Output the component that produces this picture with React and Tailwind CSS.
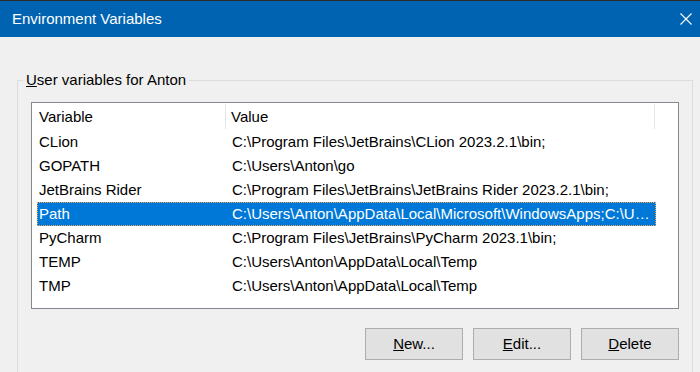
const rows = [
  { name: 'CLion', value: 'C:\\Program Files\\JetBrains\\CLion 2023.2.1\\bin;' },
  { name: 'GOPATH', value: 'C:\\Users\\Anton\\go' },
  { name: 'JetBrains Rider', value: 'C:\\Program Files\\JetBrains\\JetBrains Rider 2023.2.1\\bin;' },
  { name: 'Path', value: 'C:\\Users\\Anton\\AppData\\Local\\Microsoft\\WindowsApps;C:\\U…', selected: true },
  { name: 'PyCharm', value: 'C:\\Program Files\\JetBrains\\PyCharm 2023.1\\bin;' },
  { name: 'TEMP', value: 'C:\\Users\\Anton\\AppData\\Local\\Temp' },
  { name: 'TMP', value: 'C:\\Users\\Anton\\AppData\\Local\\Temp' },
];

const buttons = [
  { key: 'N', rest: 'ew...' },
  { key: 'E', rest: 'dit...' },
  { key: 'D', rest: 'elete' },
];

export default function App() {
  return (
    <div
      className="w-[700px] h-[372px] overflow-hidden bg-[#f0f0f0] text-black text-[15px] leading-[20px] flex flex-col"
      style={{ fontFamily: '"Liberation Sans", Arial, sans-serif' }}
    >
      {/* Title bar */}
      <div className="h-px bg-[#2b2b2b] shrink-0" />
      <div className="h-[36px] shrink-0 bg-[#0063b1] text-white flex items-center justify-between pl-3 pr-2">
        <span>Environment Variables</span>
        <svg width="12" height="12" viewBox="0 0 12 12">
          <path d="M0.5 0.5L11.5 11.5M11.5 0.5L0.5 11.5" stroke="white" strokeWidth="1.1" />
        </svg>
      </div>

      {/* Group box */}
      <fieldset className="mt-[33px] ml-[17px] mr-[7px] h-[320px] shrink-0 border border-[#dcdcdc]">
        <legend className="ml-[5px] px-[3px]">
          <u>U</u>ser variables for Anton
        </legend>
        <div className="px-[13px]">
          {/* List view */}
          <div className="mt-3 h-[207px] bg-white border border-[#828790] flex flex-col">
            <div className="h-[27px] flex shrink-0">
              <div className="w-[194px] pl-[7px] flex items-center border-r border-[#e5e5e5] my-px">Variable</div>
              <div className="w-[429px] pl-[5px] flex items-center border-r border-[#e5e5e5] my-px">Value</div>
              <div className="flex-1" />
            </div>
            {rows.map((r) => (
              <div
                key={r.name}
                className={`h-[24px] ml-[5px] w-[619px] flex items-center shrink-0 ${
                  r.selected ? 'bg-[#0078d7] text-white outline-1 outline-dotted outline-[#f2a65a] -outline-offset-1' : ''
                }`}
              >
                <div className="w-[193px] pl-[2px]">{r.name}</div>
                <div className="flex-1 pl-[2px] whitespace-nowrap">{r.value}</div>
              </div>
            ))}
          </div>

          {/* Buttons */}
          <div className="mt-[19px] flex justify-end gap-[10px]">
            {buttons.map((b) => (
              <button
                key={b.key}
                className="w-[98px] h-[32px] bg-[#e1e1e1] border border-[#adadad] text-center"
              >
                <u>{b.key}</u>
                {b.rest}
              </button>
            ))}
          </div>
        </div>
      </fieldset>
    </div>
  );
}
